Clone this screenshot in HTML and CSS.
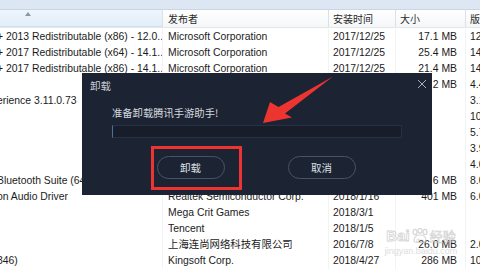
FILE: index.html
```html
<!DOCTYPE html>
<html>
<head>
<meta charset="utf-8">
<link rel="stylesheet" href="styles.css">
</head>
<body>
<div class="win">
  <div class="topbar"></div>
  <div class="header">
    <div class="hc c1 sorted"><svg class="sort" width="6" height="4" viewBox="0 0 6 4"><path d="M0 4 L3 0 L6 4 Z" fill="#8a96a6"/></svg></div>
    <div class="hc c2">发布者</div>
    <div class="hc c3">安装时间</div>
    <div class="hc c4">大小</div>
    <div class="hc c5">版</div>
  </div>
  <div class="rows">
    <div class="row"><div class="c c1 cut">+ 2013 Redistributable (x86) - 12.0....</div><div class="c c2">Microsoft Corporation</div><div class="c c3">2017/12/25</div><div class="c c4">17.1 MB</div><div class="c c5">12</div></div>
    <div class="row"><div class="c c1 cut">+ 2017 Redistributable (x64) - 14.1....</div><div class="c c2">Microsoft Corporation</div><div class="c c3">2017/12/25</div><div class="c c4">25.4 MB</div><div class="c c5">14</div></div>
    <div class="row"><div class="c c1 cut">+ 2017 Redistributable (x86) - 14.1....</div><div class="c c2">Microsoft Corporation</div><div class="c c3">2017/12/25</div><div class="c c4">21.4 MB</div><div class="c c5">14</div></div>
    <div class="row"><div class="c c1"></div><div class="c c2"></div><div class="c c3"></div><div class="c c4">4.2 MB</div><div class="c c5">4.4</div></div>
    <div class="row"><div class="c c1 cut">erience 3.11.0.73</div><div class="c c2"></div><div class="c c3"></div><div class="c c4"></div><div class="c c5">3.1</div></div>
    <div class="row"><div class="c c1"></div><div class="c c2"></div><div class="c c3"></div><div class="c c4"></div><div class="c c5">10</div></div>
    <div class="row"><div class="c c1"></div><div class="c c2"></div><div class="c c3"></div><div class="c c4"></div><div class="c c5">5.7</div></div>
    <div class="row"><div class="c c1"></div><div class="c c2"></div><div class="c c3"></div><div class="c c4"></div><div class="c c5">3.9</div></div>
    <div class="row"><div class="c c1"></div><div class="c c2"></div><div class="c c3"></div><div class="c c4"></div><div class="c c5">4.0</div></div>
    <div class="row"><div class="c c1 cut">Bluetooth Suite (64</div><div class="c c2"></div><div class="c c3"></div><div class="c c4">7.6 MB</div><div class="c c5">8.0</div></div>
    <div class="row"><div class="c c1 cut">on Audio Driver</div><div class="c c2">Realtek Semiconductor Corp.</div><div class="c c3">2018/1/16</div><div class="c c4">401 MB</div><div class="c c5">6.0</div></div>
    <div class="row"><div class="c c1"></div><div class="c c2">Mega Crit Games</div><div class="c c3">2018/3/1</div><div class="c c4"></div><div class="c c5"></div></div>
    <div class="row"><div class="c c1"></div><div class="c c2">Tencent</div><div class="c c3">2018/1/5</div><div class="c c4"></div><div class="c c5"></div></div>
    <div class="row"><div class="c c1"></div><div class="c c2">上海连尚网络科技有限公司</div><div class="c c3">2016/7/8</div><div class="c c4">26.0 MB</div><div class="c c5">2.0</div></div>
    <div class="row"><div class="c c1 cut">346)</div><div class="c c2">Kingsoft Corp.</div><div class="c c3">2018/4/27</div><div class="c c4">286 MB</div><div class="c c5">10</div></div>
  </div>

  <div class="dialog">
    <div class="dtitle">
      <span class="dname">卸载</span>
      <svg class="close" width="10" height="10" viewBox="0 0 10 10"><path d="M1 1 L9 9 M9 1 L1 9" stroke="#aab0ba" stroke-width="1" fill="none"/></svg>
    </div>
    <div class="dbody">
      <div class="msg">准备卸载腾讯手游助手!</div>
      <div class="field"></div>
    </div>
    <div class="btns">
      <div class="btn">卸载</div>
      <div class="btn">取消</div>
    </div>
  </div>

  <svg class="arrow" width="480" height="272" viewBox="0 0 480 272">
    <polygon points="333,76.5 285,113.5 292,117.5 263,123 270,102 278.5,107" fill="#ec3530"/>
  </svg>
  <div class="redbox"></div>

  <div class="watermark">
    <div class="wm1"><span class="bai">Bai</span><svg class="paw" width="18" height="16" viewBox="0 0 18 16"><g fill="none" stroke="#c8c8c8" stroke-width="1.2"><ellipse cx="4" cy="4" rx="2" ry="2.6"/><ellipse cx="9" cy="2.8" rx="2" ry="2.4"/><ellipse cx="14" cy="4" rx="2" ry="2.6"/><path d="M3 13 C3 8 6 7 9 7 C12 7 15 8 15 13 C15 15 3 15 3 13 Z"/></g><text x="5" y="13.5" font-size="6" fill="#c8c8c8" font-family="Liberation Sans">du</text></svg><span class="jy">经验</span></div>
    <div class="wm2">jingyan.baidu.com</div>
  </div>
</div>
</body>
</html>
```
FILE: styles.css
```css
html, body {
  margin: 0;
  padding: 0;
}
body {
  width: 480px;
  height: 272px;
  overflow: hidden;
  background: #ffffff;
  font-family: "Liberation Sans", "Noto Sans CJK SC", sans-serif;
  font-size: 10.4px;
  color: #1b1b1b;
}
.win {
  position: relative;
  width: 480px;
  height: 272px;
  overflow: hidden;
}
.topbar {
  height: 10px;
  background: #dde7f4;
  border-bottom: 1px solid #c9d6e6;
  box-sizing: border-box;
}
.header {
  display: flex;
  height: 18px;
  border-bottom: 1px solid #e3e7ec;
  box-sizing: border-box;
  background: linear-gradient(#ffffff, #f4f6f8);
}
.hc {
  box-sizing: border-box;
  border-right: 1px solid #dde1e6;
  display: flex;
  align-items: center;
  color: #2a2a2a;
  font-family: "Noto Sans CJK SC", sans-serif;
  font-size: 10px;
  padding-left: 4px;
}
.hc.sorted {
  background: linear-gradient(#eef5fc, #e2eef9);
  border-bottom: 1px solid #cfe0f2;
  align-items: flex-start;
}
.sort {
  margin-left: 21px;
  margin-top: 2px;
}
.c1 { width: 163px; flex: none; }
.c2 { width: 166px; flex: none; }
.c3 { width: 67px; flex: none; }
.c4 { width: 70px; flex: none; }
.c5 { flex: 1; }
.hc.c2, .c.c2 { padding-left: 5px; }
.rows {
  display: flex;
  flex-direction: column;
  padding-top: 1px;
}
.row {
  display: flex;
  height: 16px;
  align-items: center;
}
.c {
  box-sizing: border-box;
  height: 16px;
  line-height: 16px;
  white-space: nowrap;
  overflow: hidden;
  border-right: 1px solid #f1f3f5;
  padding-left: 4px;
}
.c.c1 {
  padding-left: 0;
  text-indent: -3px;
}
.c.c2 {
  font-family: "Liberation Sans", "Noto Sans CJK SC", sans-serif;
}
.c.c4 {
  text-align: right;
  padding-right: 8px;
}
.c.c5 { border-right: none; }

.dialog {
  position: absolute;
  left: 82px;
  top: 73px;
  width: 350px;
  height: 122px;
  background: #1c2333;
  display: flex;
  flex-direction: column;
  box-sizing: border-box;
  font-family: "Noto Sans CJK SC", sans-serif;
  color: #d3d7de;
}
.dtitle {
  height: 26px;
  display: flex;
  align-items: center;
  justify-content: space-between;
  padding: 0 5px 2px 8px;
  box-sizing: border-box;
}
.dname {
  font-size: 10.5px;
  color: #c9cdd4;
}
.close {
  margin-top: -2px;
}
.dbody {
  display: flex;
  flex-direction: column;
  padding-left: 30px;
  padding-top: 7px;
}
.msg {
  font-size: 10.3px;
  line-height: 14px;
  color: #d5d9df;
}
.field {
  margin-top: 5px;
  width: 290px;
  height: 13px;
  box-sizing: border-box;
  background: #171d2a;
  border: 1px solid #283042;
  border-left: 1px solid #4d6f9e;
}
.btns {
  display: flex;
  justify-content: center;
  gap: 63px;
  margin-top: 18px;
  padding-right: 2px;
}
.btn {
  width: 68px;
  height: 23px;
  box-sizing: border-box;
  border: 1px solid #4a5366;
  border-radius: 12px;
  display: flex;
  align-items: center;
  justify-content: center;
  font-size: 10.5px;
  color: #dde0e5;
}
.arrow {
  position: absolute;
  left: 0;
  top: 0;
  pointer-events: none;
}
.redbox {
  position: absolute;
  left: 151px;
  top: 146px;
  width: 91px;
  height: 44px;
  box-sizing: border-box;
  border: 3px solid #ee3333;
}
.watermark {
  position: absolute;
  left: 376px;
  top: 226px;
  width: 90px;
  display: flex;
  flex-direction: column;
  align-items: center;
  opacity: 0.75;
  pointer-events: none;
}
.wm1 {
  display: flex;
  align-items: center;
  gap: 1px;
}
.bai {
  font-family: "Liberation Sans", sans-serif;
  font-weight: bold;
  font-size: 15px;
  color: transparent;
  -webkit-text-stroke: 0.8px #c6c6c6;
}
.jy {
  font-family: "Noto Sans CJK SC", sans-serif;
  font-size: 13px;
  color: transparent;
  -webkit-text-stroke: 0.7px #c6c6c6;
}
.wm2 {
  font-family: "Liberation Sans", sans-serif;
  font-size: 9px;
  color: #d2d2d2;
  margin-top: 1px;
}
```
